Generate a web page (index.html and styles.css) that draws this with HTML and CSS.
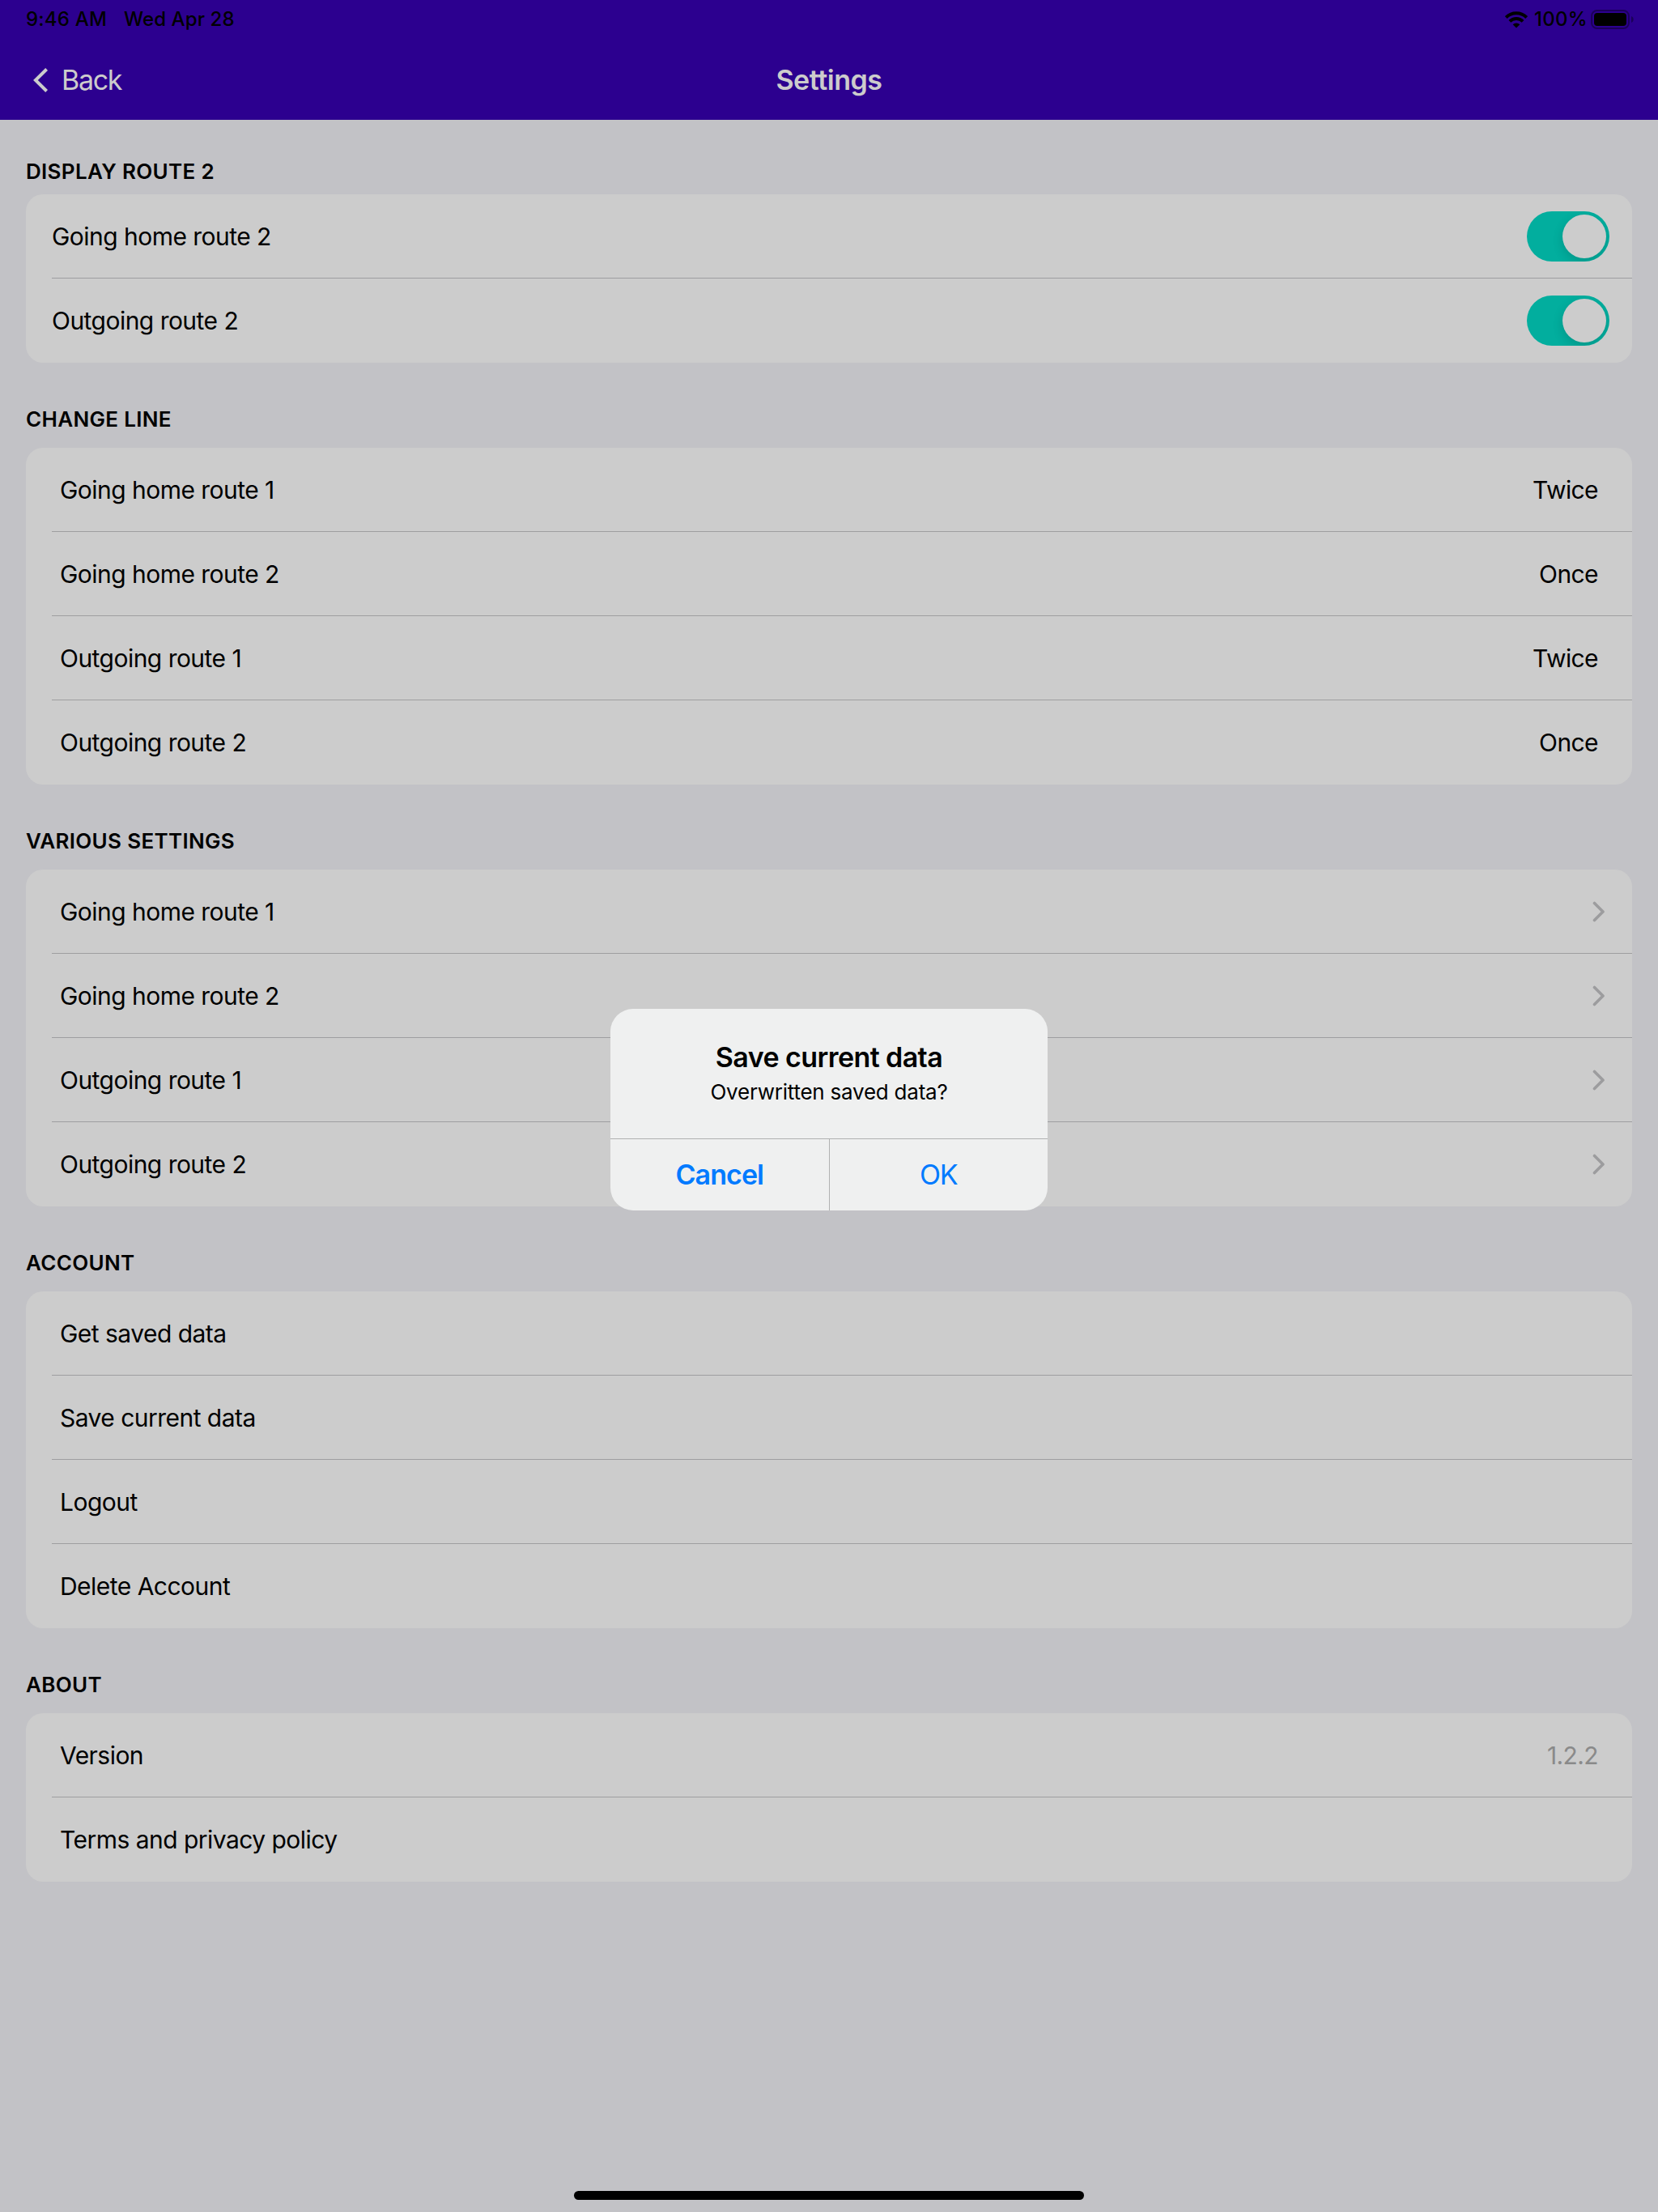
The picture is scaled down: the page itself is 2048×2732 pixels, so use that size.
FILE: index.html
```html
<!DOCTYPE html>
<html lang="en">
<head>
<meta charset="utf-8">
<title>Settings</title>
<link rel="stylesheet" href="styles.css">
</head>
<body>
<div class="screen">
  <header class="header">
    <div class="status">
      <span class="status-time">9:46 AM</span>
      <span class="status-date">Wed Apr 28</span>
      <svg class="wifi" width="28" height="21" viewBox="0 0 28 21">
        <g fill="none" stroke="#000" stroke-width="4">
          <path d="M1.3 7.6 A18 18 0 0 1 26.7 7.6"/>
          <path d="M5.9 12.3 A11.5 11.5 0 0 1 22.1 12.3"/>
        </g>
        <path d="M9.7 16.2 A6.2 6.2 0 0 1 18.3 16.2 L14 20.4 Z"/>
      </svg>
      <span class="status-percent">100%</span>
      <svg class="battery" width="54" height="24" viewBox="0 0 54 24">
        <rect x="1.1" y="1.1" width="45.8" height="21.8" rx="6.5" fill="none" stroke="#1b0059" stroke-width="2"/>
        <rect x="4" y="4" width="40" height="16" rx="4"/>
        <path d="M50 8 C53.6 9.2 53.6 14.8 50 16 Z" fill="#1b0059"/>
      </svg>
    </div>
    <nav class="nav">
      <a class="back">
        <svg width="22" height="32" viewBox="0 0 22 32"><path d="M19.6 2.500 L5.900 16 L19.6 29.500" fill="none" stroke="#ccc" stroke-width="4"/></svg>
        <span class="back-label">Back</span>
      </a>
      <h1 class="title">Settings</h1>
    </nav>
  </header>

  <main class="content">
    <section class="section first">
      <h2 class="heading">DISPLAY ROUTE 2</h2>
      <div class="card tight">
        <div class="row"><span class="label">Going home route 2</span><span class="switch"><span class="knob"></span></span></div>
        <div class="row"><span class="label">Outgoing route 2</span><span class="switch"><span class="knob"></span></span></div>
      </div>
    </section>

    <section class="section">
      <h2 class="heading">CHANGE LINE</h2>
      <div class="card">
        <div class="row"><span class="label">Going home route 1</span><span class="value">Twice</span></div>
        <div class="row"><span class="label">Going home route 2</span><span class="value">Once</span></div>
        <div class="row"><span class="label">Outgoing route 1</span><span class="value">Twice</span></div>
        <div class="row"><span class="label">Outgoing route 2</span><span class="value">Once</span></div>
      </div>
    </section>

    <section class="section">
      <h2 class="heading">VARIOUS SETTINGS</h2>
      <div class="card">
        <div class="row"><span class="label">Going home route 1</span><svg class="chevron" viewBox="0 0 16 26"><path d="M2.500 2.500 L13 13 L2.500 23.500"/></svg></div>
        <div class="row"><span class="label">Going home route 2</span><svg class="chevron" viewBox="0 0 16 26"><path d="M2.500 2.500 L13 13 L2.500 23.500"/></svg></div>
        <div class="row"><span class="label">Outgoing route 1</span><svg class="chevron" viewBox="0 0 16 26"><path d="M2.500 2.500 L13 13 L2.500 23.500"/></svg></div>
        <div class="row"><span class="label">Outgoing route 2</span><svg class="chevron" viewBox="0 0 16 26"><path d="M2.500 2.500 L13 13 L2.500 23.500"/></svg></div>
      </div>
    </section>

    <section class="section">
      <h2 class="heading">ACCOUNT</h2>
      <div class="card">
        <div class="row"><span class="label">Get saved data</span></div>
        <div class="row"><span class="label">Save current data</span></div>
        <div class="row"><span class="label">Logout</span></div>
        <div class="row"><span class="label">Delete Account</span></div>
      </div>
    </section>

    <section class="section">
      <h2 class="heading">ABOUT</h2>
      <div class="card">
        <div class="row"><span class="label">Version</span><span class="value muted">1.2.2</span></div>
        <div class="row"><span class="label">Terms and privacy policy</span></div>
      </div>
    </section>
  </main>

  <div class="alert" role="alertdialog">
    <div class="alert-body">
      <div class="alert-title">Save current data</div>
      <div class="alert-message">Overwritten saved data?</div>
    </div>
    <div class="alert-actions">
      <div class="action strong">Cancel</div>
      <div class="action plain">OK</div>
    </div>
  </div>
  <div class="home-indicator"></div>
</div>
</body>
</html>
```
FILE: styles.css
```css
* { box-sizing: border-box; }

body {
  margin: 0;
  font-family: Inter, "Liberation Sans", sans-serif;
  color: #000;
}

.screen {
  position: relative;
  width: 2048px;
  height: 2732px;
  overflow: hidden;
  background: #c2c2c6;
}

.header {
  height: 148px;
  background: #2c008f;
  color: #ccc;
}

.status {
  display: flex;
  align-items: center;
  height: 48px;
  padding: 0 29px 0 32px;
  color: #000;
  font-size: 24px;
  font-weight: 450;
  line-height: 48px;
  white-space: nowrap;
}
.status-time { width: 121px; letter-spacing: 0.2px; }
.status-date { letter-spacing: 0.1px; }
.wifi { margin-left: auto; margin-right: 8px; }
.status-percent { width: 70px; letter-spacing: 0.3px; }

.nav {
  display: grid;
  grid-template-columns: 1fr auto 1fr;
  align-items: center;
  height: 101px;
  padding: 0 38px;
}
.back { display: flex; align-items: center; gap: 16px; font-size: 34px; line-height: 40px; }
.back-label { letter-spacing: -1.3px; }
.title { margin: 0; font-size: 34px; font-weight: 600; line-height: 40px; letter-spacing: -0.45px; }

.content { padding: 0 32px; }
.heading {
  display: flex;
  align-items: flex-end;
  height: 105px;
  margin: 0;
  padding-bottom: 16px;
  font-size: 26px;
  font-weight: 600;
  line-height: 38px;
  letter-spacing: 0.32px;
}
.first .heading { height: 92px; padding-bottom: 9px; }

.card { border-radius: 21px; background: #ccc; padding-left: 32px; }
.row {
  display: flex;
  align-items: center;
  justify-content: space-between;
  height: 104px;
  padding: 1px 42px 0 10px;
  border-bottom: 1px solid #9e9ea0;
  font-size: 30px;
  line-height: 40px;
}
.row:last-child { border-bottom-color: transparent; }
.tight .row { padding: 1px 28px 0 0; }
.label { letter-spacing: -0.53px; }
.value { letter-spacing: -0.6px; }
.muted { color: #8a8a8a; }

.chevron {
  width: 16px;
  height: 26px;
  margin-right: -9px;
  fill: none;
  stroke: #9c9c9e;
  stroke-width: 3.6;
  stroke-linecap: round;
  stroke-linejoin: round;
}

.switch {
  display: flex;
  justify-content: flex-end;
  width: 102px;
  height: 62px;
  padding: 4px;
  overflow: hidden;
  border-radius: 31px;
  background: #02ae9e;
}
.knob {
  width: 54px;
  height: 54px;
  border-radius: 50%;
  background: #ccc;
  box-shadow: 0 5px 14px rgba(0, 0, 0, 0.14);
}

.alert {
  position: absolute;
  left: 754px;
  top: 1246px;
  width: 540px;
  height: 249px;
  overflow: hidden;
  border-radius: 28px;
  background: #eff0f0;
  text-align: center;
}
.alert-body { height: 160px; padding-top: 40px; }
.alert-title { font-size: 34px; font-weight: 600; line-height: 40px; letter-spacing: -0.58px; }
.alert-message { margin-top: 5px; font-size: 26px; line-height: 36px; letter-spacing: -0.23px; }
.alert-actions { display: flex; height: 89px; border-top: 1px solid #b0b1b1; }
.action { flex: 1; font-size: 34px; line-height: 88px; color: #007aff; }
.strong { border-right: 1px solid #b0b1b1; font-weight: 600; letter-spacing: -0.95px; }
.plain { letter-spacing: -1.1px; }

.home-indicator {
  position: absolute;
  left: 709px;
  top: 2706px;
  width: 630px;
  height: 11px;
  border-radius: 6px;
  background: #000;
}
```
